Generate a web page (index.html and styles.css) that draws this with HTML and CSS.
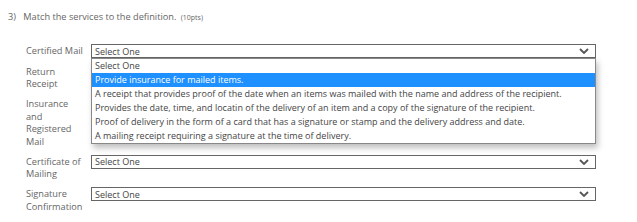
FILE: index.html
```html
<!DOCTYPE html>
<html lang="en">
<head>
	<meta charset="UTF-8">
	<title>Question 3</title>
<link rel="stylesheet" href="styles.css">
</head>
<body>
	<div class="question">
		<div class="qTitle">
			<span class="qNum">3)</span>
			<span class="qText">Match the services to the definition.</span>
			<span class="qPts">(10pts)</span>
		</div>
		<div class="matchList">
			<div class="matchRow">
				<div class="term">Certified Mail</div>
				<div class="pick open">
					<div class="box">
						<span>Select One</span>
						<svg class="arrow" width="10" height="6" viewBox="0 0 10 6"><path d="M1 1 L5 5 L9 1" fill="none" stroke="#555" stroke-width="1.8"/></svg>
					</div>
					<ul class="options">
						<li>Select One</li>
						<li class="hover">Provide insurance for mailed items.</li>
						<li>A receipt that provides proof of the date when an items was mailed with the name and address of the recipient.</li>
						<li>Provides the date, time, and locatin of the delivery of an item and a copy of the signature of the recipient.</li>
						<li>Proof of delivery in the form of a card that has a signature or stamp and the delivery address and date.</li>
						<li>A mailing receipt requiring a signature at the time of delivery.</li>
					</ul>
				</div>
			</div>
			<div class="matchRow">
				<div class="term">Return Receipt</div>
				<div class="pick covered">
					<div class="box">
						<span>Select One</span>
						<svg class="arrow" width="10" height="6" viewBox="0 0 10 6"><path d="M1 1 L5 5 L9 1" fill="none" stroke="#555" stroke-width="1.8"/></svg>
					</div>
				</div>
			</div>
			<div class="matchRow">
				<div class="term">Insurance and Registered Mail</div>
				<div class="pick covered">
					<div class="box">
						<span>Select One</span>
						<svg class="arrow" width="10" height="6" viewBox="0 0 10 6"><path d="M1 1 L5 5 L9 1" fill="none" stroke="#555" stroke-width="1.8"/></svg>
					</div>
				</div>
			</div>
			<div class="matchRow">
				<div class="term">Certificate of Mailing</div>
				<div class="pick">
					<div class="box">
						<span>Select One</span>
						<svg class="arrow" width="10" height="6" viewBox="0 0 10 6"><path d="M1 1 L5 5 L9 1" fill="none" stroke="#555" stroke-width="1.8"/></svg>
					</div>
				</div>
			</div>
			<div class="matchRow">
				<div class="term">Signature Confirmation</div>
				<div class="pick">
					<div class="box">
						<span>Select One</span>
						<svg class="arrow" width="10" height="6" viewBox="0 0 10 6"><path d="M1 1 L5 5 L9 1" fill="none" stroke="#555" stroke-width="1.8"/></svg>
					</div>
				</div>
			</div>
		</div>
	</div>
</body>
</html>
```

FILE: styles.css
```css
body,div,ul,li{padding: 0;margin: 0;}
li{list-style: none;}
body{
	background: #fff;
	font-family: "Open Sans", "Liberation Sans", sans-serif;
	color: #666;
}
.question{
	padding: 10px 0 0 8px;
}
.qTitle{
	font-size: 9.2px;
	line-height: 14px;
	color: #666;
}
.qNum{
	margin-right: 5px;
}
.qPts{
	font-size: 7px;
	margin-left: 2px;
}
.matchList{
	margin-top: 19px;
	padding-left: 18px;
	display: flex;
	flex-direction: column;
	gap: 6.5px;
}
.matchRow{
	display: flex;
	align-items: flex-start;
}
.term{
	width: 59px;
	margin-right: 6px;
	font-size: 9.2px;
	line-height: 12.5px;
	padding-top: 1px;
	color: #666;
}
.pick{
	width: 505px;
	position: relative;
}
.covered .box{
	visibility: hidden;
}
.box{
	height: 12px;
	border: 1px solid #666;
	display: flex;
	align-items: center;
	justify-content: space-between;
	padding: 0 6px 0 3px;
	font-size: 9px;
	color: #444;
}
.arrow{
	display: block;
}
.options{
	position: absolute;
	top: 14px;
	left: 0;
	width: 503px;
	background: #fff;
	border: 1px solid #888;
	box-shadow: 2px 4px 6px rgba(0,0,0,0.25);
	z-index: 2;
}
.options li{
	height: 14px;
	line-height: 14px;
	padding-left: 3px;
	font-size: 9px;
	color: #444;
	white-space: nowrap;
}
.options li.hover{
	background: #1e90ff;
	color: #fff;
}
```
